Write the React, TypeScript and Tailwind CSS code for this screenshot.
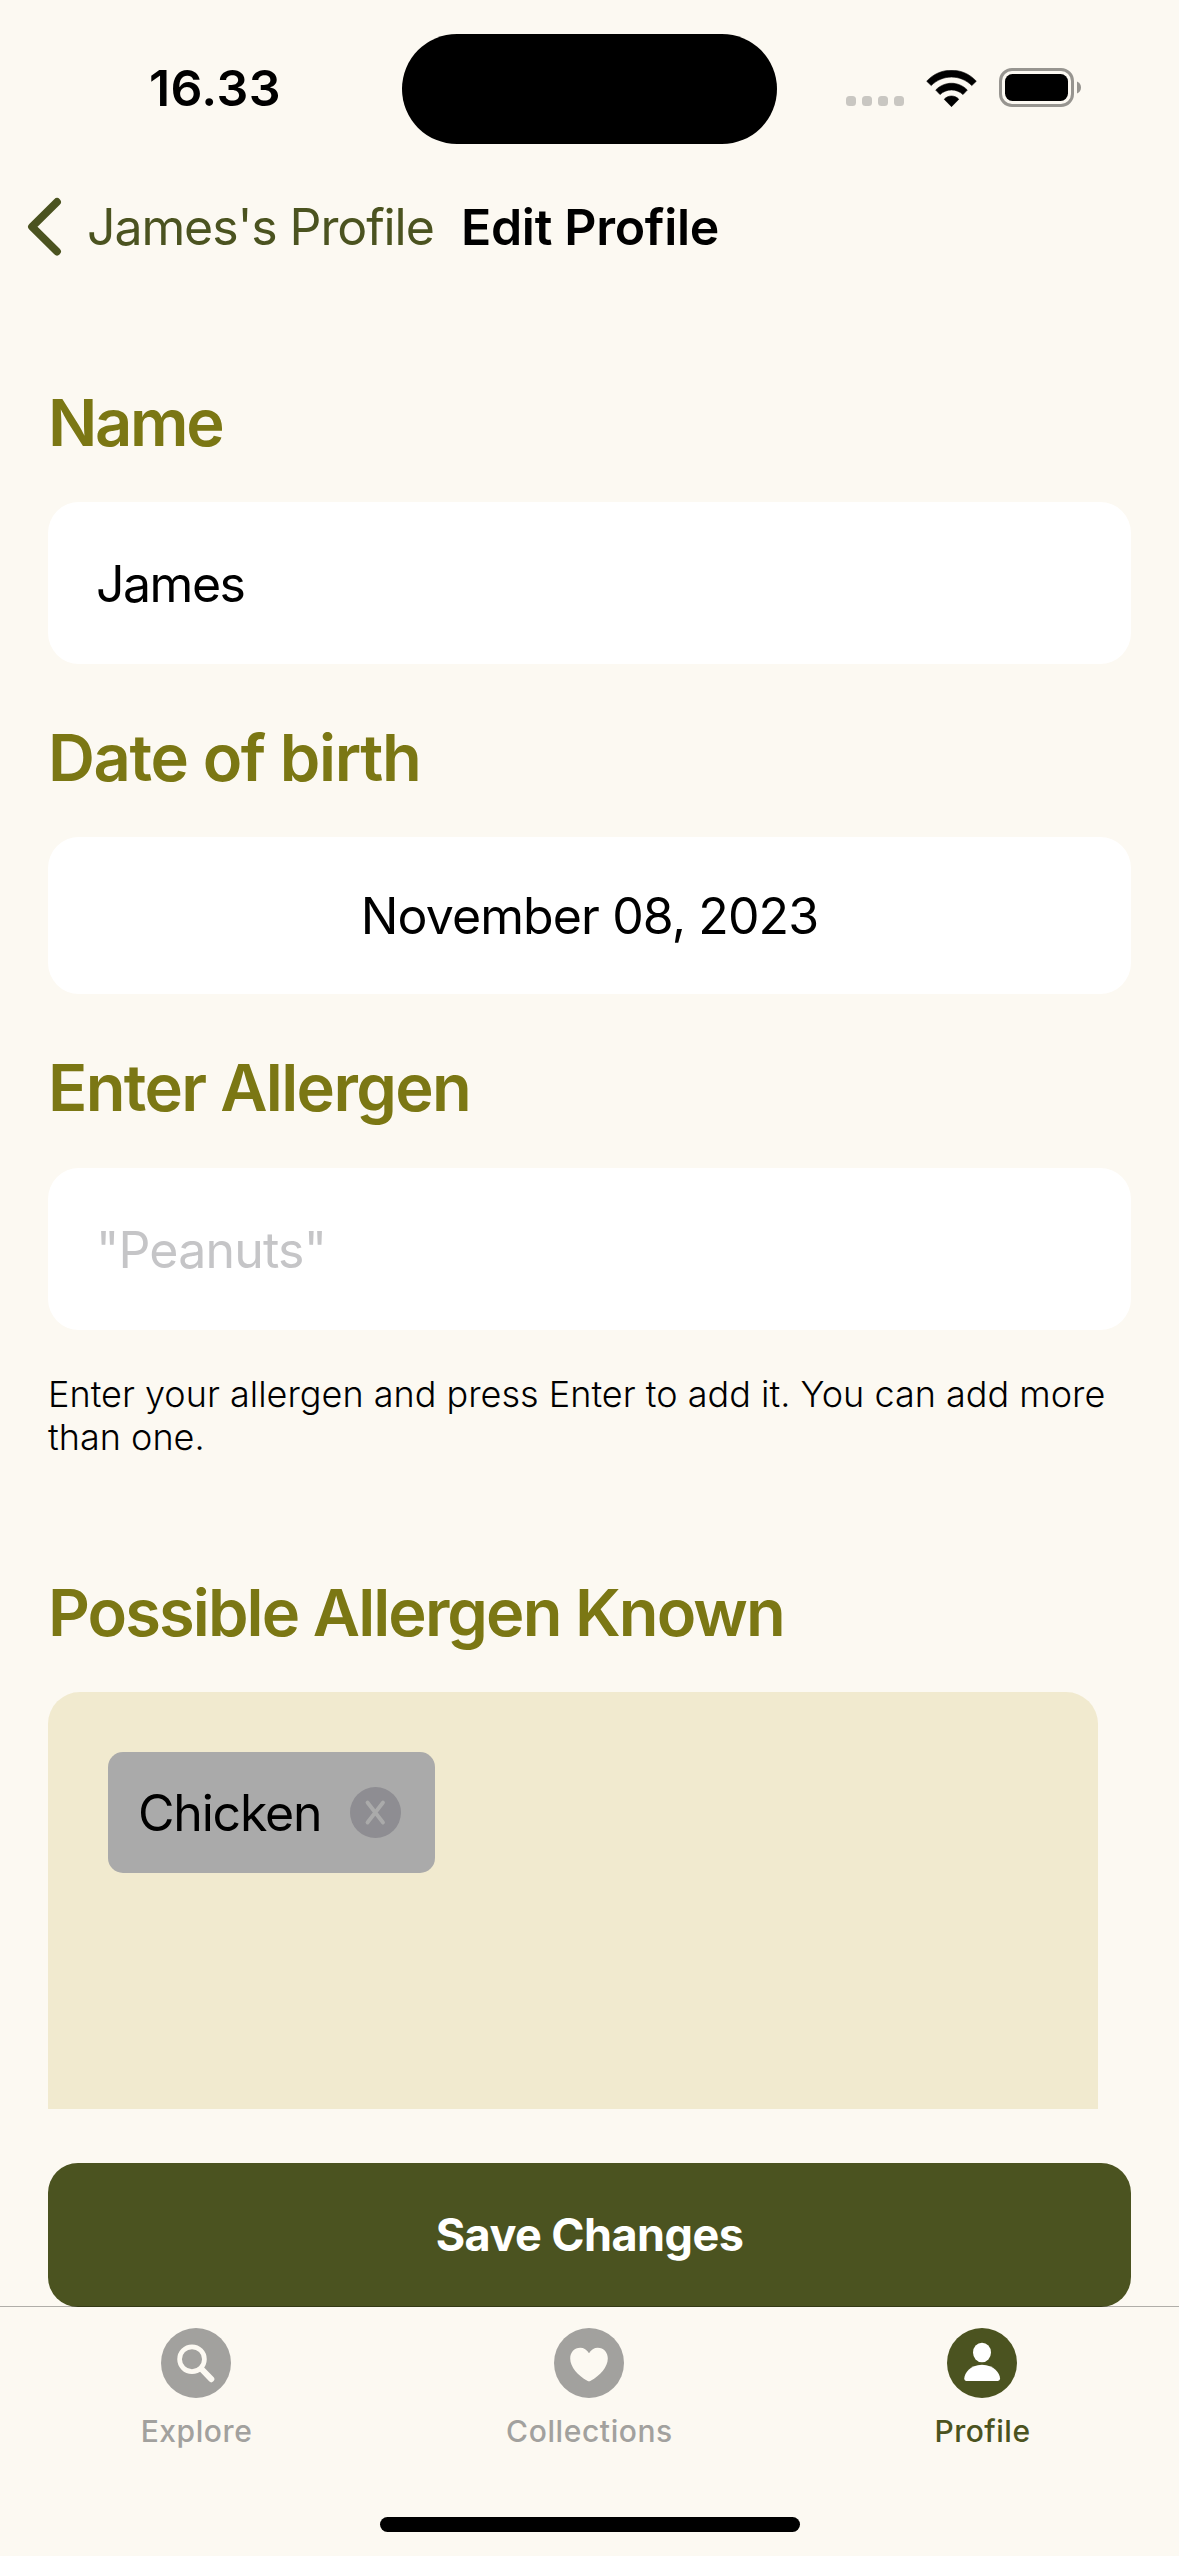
import type { ReactNode } from 'react';

function StatusBar() {
  return (
    <div className="relative h-[177px] shrink-0">
      <div className="absolute left-[402px] top-[33.5px] h-[110.5px] w-[375px] rounded-full bg-black" />
      <div className="flex h-[177px] items-center justify-between pl-[149px] pr-[98px]">
        <span className="-mt-px text-[50px] font-semibold leading-[60px] tracking-[0.4px]">16.33</span>
        <div className="flex h-10 items-center">
          <div className="mr-[22px] mt-[25px] flex gap-[6px]">
            <span className="h-[10px] w-[10px] rounded-[3.5px] bg-[#c9c7c2]" />
            <span className="h-[10px] w-[10px] rounded-[3.5px] bg-[#c9c7c2]" />
            <span className="h-[10px] w-[10px] rounded-[3.5px] bg-[#c9c7c2]" />
            <span className="h-[10px] w-[10px] rounded-[3.5px] bg-[#c9c7c2]" />
          </div>
          <svg className="-mt-px mr-[22px] h-[37px] w-[51px]" viewBox="0 0 51 37" fill="black" stroke="black" strokeWidth="0.6" strokeLinejoin="round">
            <path d="M.7 11.200C14 -3.500 37 -3.500 50.300 11.200L45.800 15.600C34.500 4.200 16.500 4.200 5.200 15.600Z" />
            <path d="M9.700 20C18.500 11 32.500 11 41.300 20L37 24.600C30.500 18.400 20.500 18.400 14 24.600Z" />
            <path d="M18.200 29.300C22 24.900 29 24.900 32.800 29.300L25.500 36.700Z" />
          </svg>
          <svg className="-mt-px h-10 w-[82px]" viewBox="0 0 82 40">
            <rect x="1.500" y="1.500" width="72" height="36" rx="11.500" fill="none" stroke="#979590" strokeWidth="3" />
            <rect x="6" y="6" width="63" height="27" rx="7.500" fill="black" />
            <path d="M78 13.500c2.500 1 4 3.300 4 6s-1.500 5-4 6z" fill="#979590" />
          </svg>
        </div>
      </div>
    </div>
  );
}

function NavBar() {
  return (
    <header className="flex h-[100px] shrink-0 items-center pl-[27px] text-[50px] leading-[60px]">
      <svg className="mr-[25px] h-[60px] w-[35px] shrink-0" viewBox="0 0 35 60" fill="none" stroke="#4b5320" strokeWidth="7.800" strokeLinecap="round" strokeLinejoin="round">
        <path d="M30 5L5 29.800L30 54.500" />
      </svg>
      <a className="w-[374px] whitespace-nowrap tracking-[-1.100px] text-[#4b5320]">James's Profile</a>
      <h1 className="whitespace-nowrap font-semibold tracking-[-0.300px]">Edit Profile</h1>
    </header>
  );
}

function Heading({ children, className }: { children: ReactNode; className: string }) {
  return (
    <h2 className={`whitespace-nowrap text-[65px] font-semibold leading-[78px] text-[#7b7714] ${className}`}>{children}</h2>
  );
}

function Field({ children, className }: { children: ReactNode; className: string }) {
  return <div className={`flex items-center rounded-[31px] bg-white text-[50px] leading-[60px] ${className}`}>{children}</div>;
}

function Tab({ label, className, labelClassName, children }: { label: string; className: string; labelClassName: string; children: ReactNode }) {
  return (
    <div className={`flex flex-1 flex-col items-center ${className}`}>
      <svg className="mr-px h-[70px] w-[70px]" viewBox="0 0 70 70">
        <circle cx="35" cy="35" r="35" fill="currentColor" />
        {children}
      </svg>
      <span className={`mt-[15px] text-[30px] font-medium leading-9 ${labelClassName}`}>{label}</span>
    </div>
  );
}

export default function App() {
  return (
    <div className="flex h-[2556px] w-[1179px] flex-col overflow-hidden bg-[#fcf9f2] font-['Inter',sans-serif] text-black">
      <StatusBar />
      <NavBar />
      <main className="flex shrink-0 flex-col px-12 pt-[107px]">
        <Heading className="tracking-[-2.300px]">Name</Heading>
        <Field className="mt-[40px] h-[162px] pl-[48px] pt-px tracking-[-1.500px]">James</Field>
        <Heading className="mt-[55px] tracking-[-1.350px]">Date of birth</Heading>
        <Field className="mt-[40px] h-[157px] justify-center tracking-[-0.900px]">November 08, 2023</Field>
        <Heading className="mt-[55px] tracking-[-1.640px]">Enter Allergen</Heading>
        <Field className="mt-[41px] h-[162px] pl-[48px] pt-px tracking-[-0.800px] text-[#c5c5c7]">"Peanuts"</Field>
        <p className="mt-[43px] whitespace-nowrap text-[36px] font-light leading-[43px] tracking-[0.010px]">
          Enter your allergen and press Enter to add it. You can add more
          <br />
          than one.
        </p>
        <Heading className="mt-[115px] tracking-[-1.900px]">Possible Allergen Known</Heading>
        <div className="mt-[40px] h-[417px] w-[1050px] rounded-t-[32px] bg-[#f1eacf] pl-[60px] pt-[60px]">
          <div className="flex h-[121px] w-[327px] items-center justify-between rounded-[15px] bg-[#aaaaaa] pl-[30px] pr-[34px]">
            <span className="text-[50px] leading-[60px] tracking-[-1.210px]">Chicken</span>
            <svg className="h-[51px] w-[51px]" viewBox="0 0 51 51">
              <circle cx="25.500" cy="25.500" r="25.500" fill="#8e8d92" />
              <path d="M17.500 15.500L33 35.500M33 15.500L17.500 35.500" stroke="#aaaaaa" strokeWidth="3.800" strokeLinecap="round" />
            </svg>
          </div>
        </div>
        <button className="mt-[54px] h-36 rounded-[30px] bg-[#4b5320] text-[45px] font-bold tracking-[-0.560px] text-white">Save Changes</button>
      </main>
      <nav className="relative -mt-px flex h-[211px] shrink-0 border-t border-black/30 pt-[21px]">
        <Tab label="Explore" className="text-[#a2a19e]" labelClassName="tracking-[0.570px]">
          <circle cx="31" cy="31.200" r="12.400" fill="none" stroke="#fcf9f2" strokeWidth="4.700" />
          <path d="M40.500 41L50.300 51.200" stroke="#fcf9f2" strokeWidth="6" strokeLinecap="round" />
        </Tab>
        <Tab label="Collections" className="text-[#a2a19e]" labelClassName="tracking-[0.590px]">
          <path d="M35 25.200C33 21.700 29.800 19.700 26.200 19.700C20.300 19.700 16.200 24.300 16.200 30.400C16.200 39 24 47.400 33.300 52.800C34.500 53.500 35.500 53.500 36.700 52.800C46 47.400 53.800 39 53.800 30.400C53.800 24.300 49.700 19.700 43.800 19.700C40.200 19.700 37 21.700 35 25.200Z" fill="#fcf9f2" />
        </Tab>
        <Tab label="Profile" className="text-[#4b5320]" labelClassName="tracking-[0.500px]">
          <ellipse cx="35" cy="24.500" rx="9" ry="9.800" fill="white" />
          <path d="M19.500 53C18 53 17.300 52.200 17.300 50.300C17.300 45.500 23 36.700 35 36.700C47 36.700 53 45.500 53 50.300C53 52.200 52 53 50.500 53Z" fill="white" />
        </Tab>
      </nav>
      <div className="mx-auto h-[15px] w-[420px] shrink-0 rounded-full bg-black" />
    </div>
  );
}
